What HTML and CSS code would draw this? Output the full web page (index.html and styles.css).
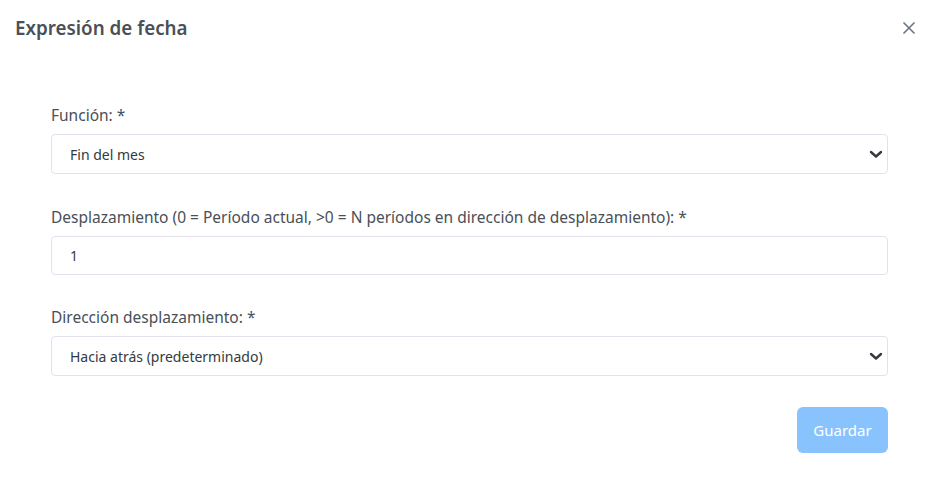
FILE: index.html
```html
<!DOCTYPE html>
<html lang="es">
<head>
<meta charset="utf-8">
<link rel="stylesheet" href="styles.css">
</head>
<body>
<div class="modal">
  <div class="modal-header">
    <h5 class="modal-title">Expresión de fecha</h5>
    <button class="close" type="button" aria-label="Cerrar">
      <svg width="14" height="14" viewBox="0 0 14 14"><path d="M1.5 1.5 L12.5 12.5 M12.5 1.5 L1.5 12.5" stroke="#6c757d" stroke-width="1.6" fill="none"/></svg>
    </button>
  </div>
  <div class="modal-body">
    <div class="form-group g1">
      <label class="label">Función: *</label>
      <div class="control select">
        <span>Fin del mes</span>
        <svg class="chev" width="14" height="10" viewBox="0 0 14 10"><path d="M2 3 L7 7.5 L12 3" stroke="#343a40" stroke-width="2.4" fill="none" stroke-linecap="round" stroke-linejoin="round"/></svg>
      </div>
    </div>
    <div class="form-group g2">
      <label class="label">Desplazamiento (0 = Período actual, &gt;0 = N períodos en dirección de desplazamiento): *</label>
      <div class="control input"><span>1</span></div>
    </div>
    <div class="form-group g3">
      <label class="label">Dirección desplazamiento: *</label>
      <div class="control select">
        <span>Hacia atrás (predeterminado)</span>
        <svg class="chev" width="14" height="10" viewBox="0 0 14 10"><path d="M2 3 L7 7.5 L12 3" stroke="#343a40" stroke-width="2.4" fill="none" stroke-linecap="round" stroke-linejoin="round"/></svg>
      </div>
    </div>
    <div class="actions">
      <button class="btn" type="button" disabled>Guardar</button>
    </div>
  </div>
</div>
</body>
</html>
```
FILE: styles.css
```css
* { box-sizing: border-box; }
html, body { margin: 0; padding: 0; background: #fff; }
body {
  font-family: "Noto Sans", "Open Sans", sans-serif;
  color: #495057;
  width: 938px;
  height: 490px;
  overflow: hidden;
}
.modal { display: flex; flex-direction: column; }
.modal-header {
  display: flex;
  justify-content: space-between;
  align-items: flex-start;
  padding: 14px 22px 0 15px;
  height: 56px;
}
.modal-title {
  margin: 0;
  font-size: 18.8px;
  font-weight: 600;
  color: #495057;
  line-height: 28px;
}
.close {
  border: 0;
  background: transparent;
  padding: 0;
  margin-top: 7px;
  width: 14px;
  height: 14px;
  display: block;
}
.close svg { display: block; }
.modal-body {
  padding: 48px 50px 0 51px;
  display: flex;
  flex-direction: column;
}
.form-group { display: flex; flex-direction: column; }
.label {
  font-size: 15.5px;
  line-height: 22px;
  color: #495057;
  margin-bottom: 8px;
}
.g2 { margin-top: 32px; }
.g3 { margin-top: 31px; }
.control {
  height: 40px;
  border: 1px solid #e3e1ec;
  border-radius: 4px;
  display: flex;
  align-items: center;
  justify-content: space-between;
  padding: 0 4px 0 18px;
  font-size: 14px;
  color: #343a40;
  background: #fff;
}
.input { height: 39px; }
.chev { display: block; }
.actions {
  display: flex;
  justify-content: flex-end;
  margin-top: 31px;
}
.btn {
  width: 91px;
  height: 46px;
  border: 0;
  border-radius: 6px;
  background: #89c3fe;
  color: #fff;
  font-family: inherit;
  font-size: 15px;
  padding: 0;
}
```
